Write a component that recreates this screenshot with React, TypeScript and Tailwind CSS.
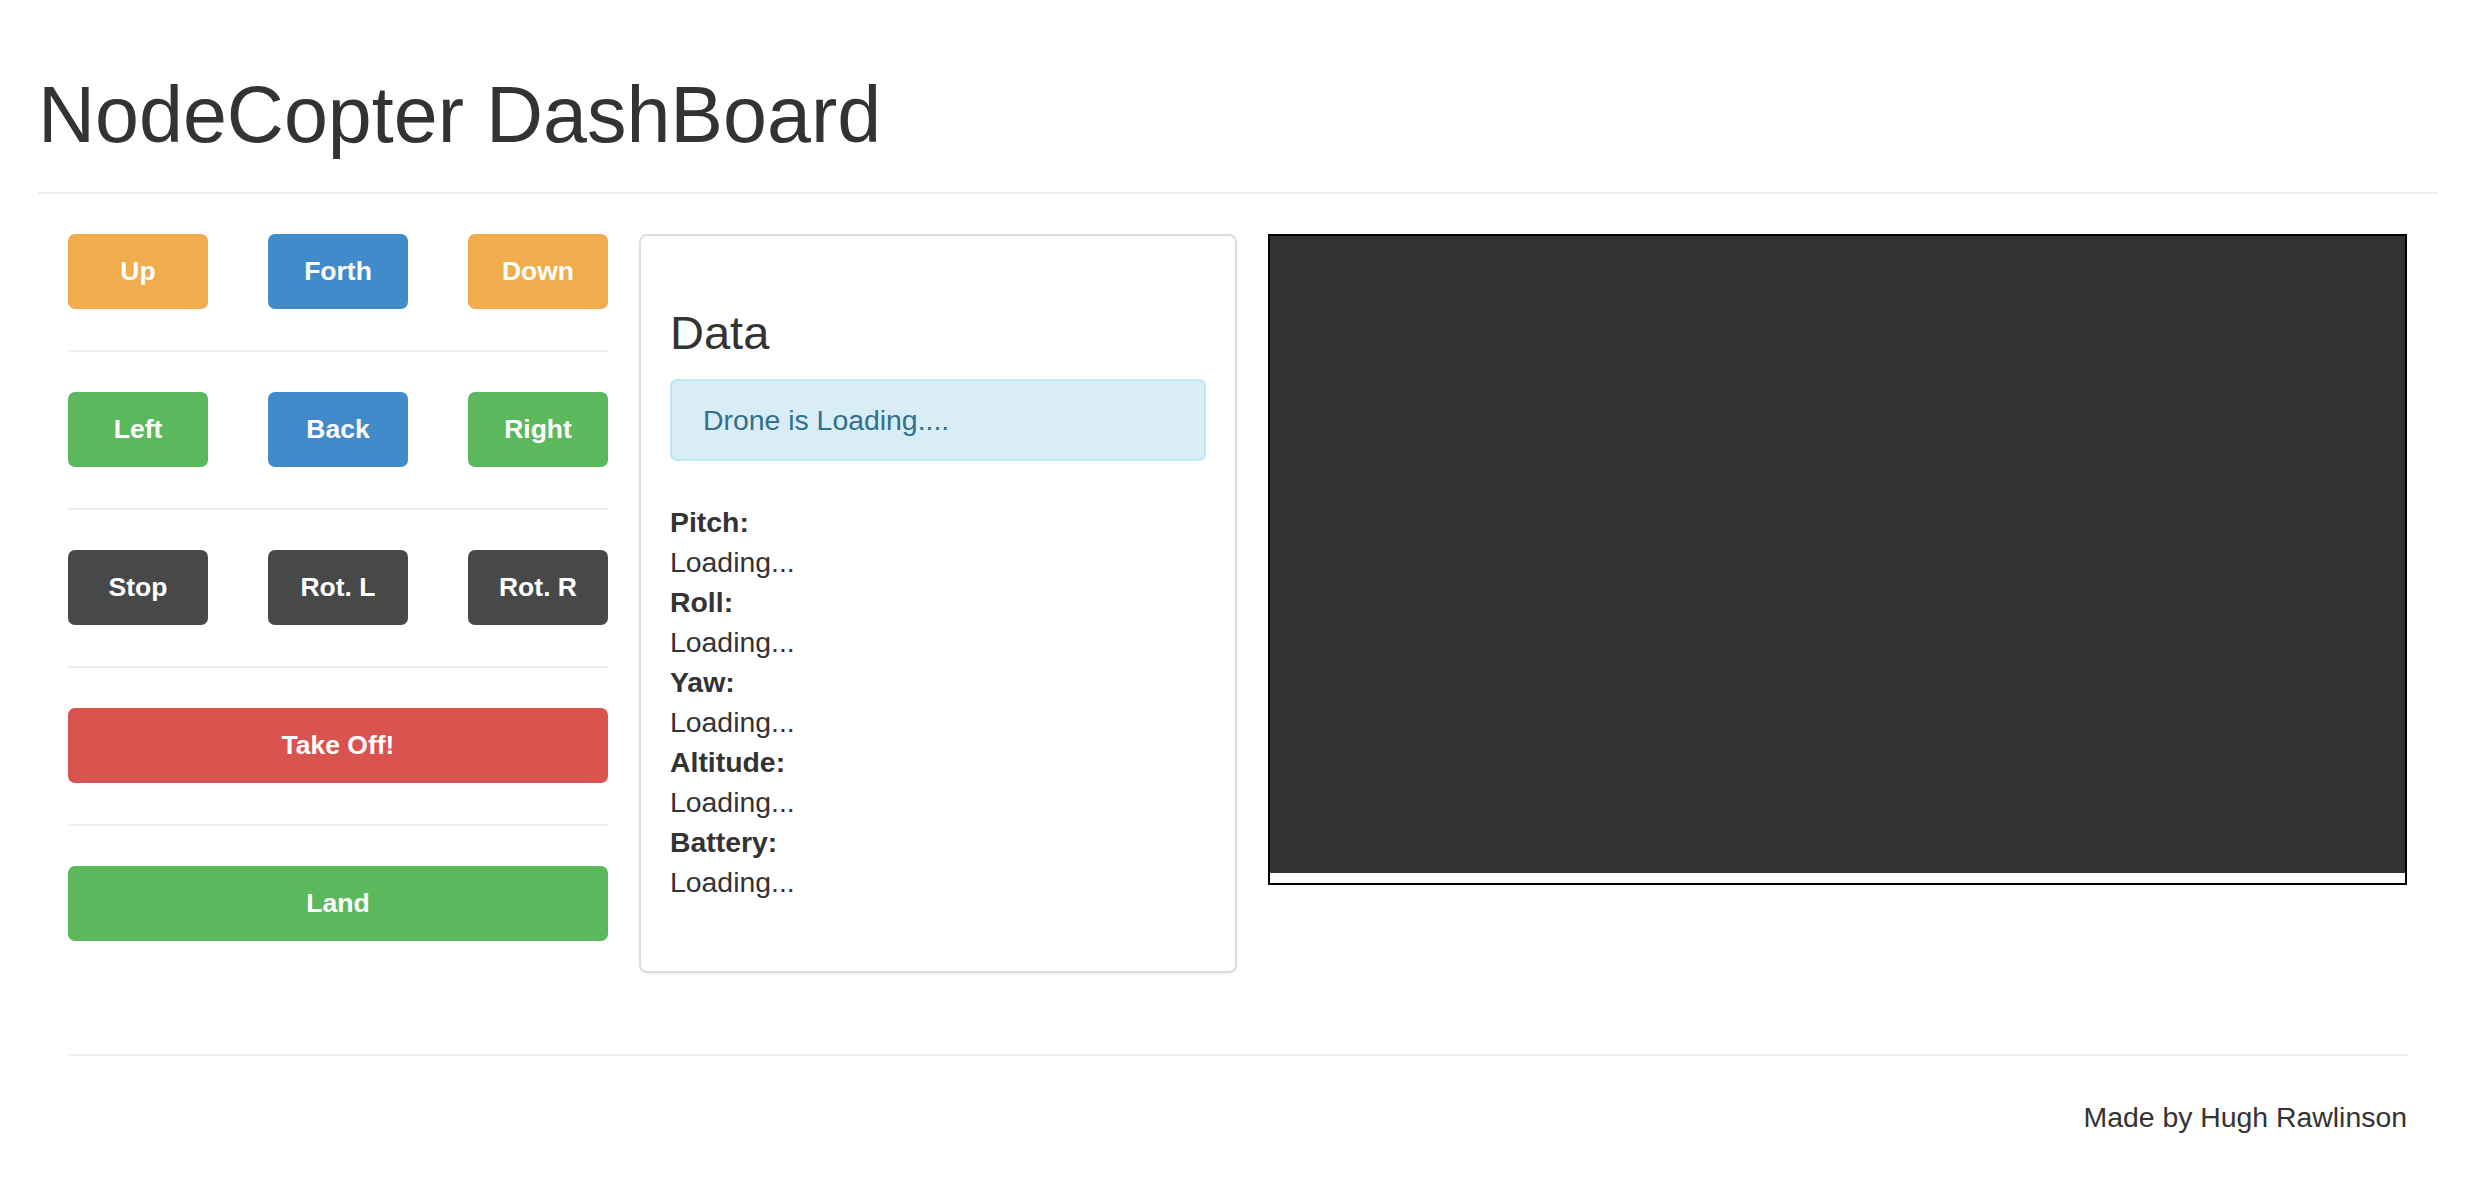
const rows = [
  [
    { label: "Up", color: "bg-[#f0ad4e]" },
    { label: "Forth", color: "bg-[#428bca]" },
    { label: "Down", color: "bg-[#f0ad4e]" }
  ],
  [
    { label: "Left", color: "bg-[#5cb85c]" },
    { label: "Back", color: "bg-[#428bca]" },
    { label: "Right", color: "bg-[#5cb85c]" }
  ],
  [
    { label: "Stop", color: "bg-[#474949]" },
    { label: "Rot. L", color: "bg-[#474949]" },
    { label: "Rot. R", color: "bg-[#474949]" }
  ]
];

const readings = ["Pitch", "Roll", "Yaw", "Altitude", "Battery"];

function Btn({ label, color, wide }: { label: string; color: string; wide?: boolean }) {
  return (
    <button
      className={`${color} ${wide ? "w-full" : "w-[140px]"} h-[75px] rounded-[7px] flex items-center justify-center text-white font-bold text-[26.5px] leading-none`}
    >
      {label}
    </button>
  );
}

function Divider() {
  return <div className="h-[2px] bg-[#eeeeee] mt-[41px] mb-[40px]" />;
}

export default function App() {
  return (
    <div className="min-h-screen bg-white text-[#333333] font-['Liberation_Sans',Arial,sans-serif] pb-[40px]">
      <div className="pl-[38px] pr-[28px]">
        <h1 className="pt-[72px] text-[79px] leading-[86px] font-normal">NodeCopter DashBoard</h1>
        <div className="h-[2px] bg-[#eeeeee] mt-[34px]" />
      </div>

      <div className="flex items-start pl-[68px] mt-[40px]">
        <div className="w-[540px]">
          {rows.map((row, i) => (
            <div key={i}>
              <div className="flex justify-between">
                {row.map((b) => (
                  <Btn key={b.label} label={b.label} color={b.color} />
                ))}
              </div>
              <Divider />
            </div>
          ))}
          <Btn label="Take Off!" color="bg-[#d9534f]" wide />
          <Divider />
          <Btn label="Land" color="bg-[#5cb85c]" wide />
        </div>

        <div className="ml-[31px] w-[598px] border-2 border-[#dddddd] rounded-[8px] shadow-[0_2px_2px_rgba(0,0,0,0.05)] px-[29px] pt-[71px] pb-[69px]">
          <h2 className="text-[47px] leading-[52px] font-normal">Data</h2>
          <div className="mt-[20px] border-2 border-[#bce8f1] bg-[#d9edf7] text-[#31708f] rounded-[7px] pl-[31px] py-[19px] text-[28.4px] leading-[40px]">
            Drone is Loading....
          </div>
          <div className="mt-[41px] text-[28.4px] leading-[40px]">
            {readings.map((r) => (
              <div key={r}>
                <div className="font-bold">{r}:</div>
                <div>Loading...</div>
              </div>
            ))}
          </div>
        </div>

        <div className="ml-[31px] w-[1139px] border-2 border-black bg-white">
          <div className="h-[637px] bg-[#333333]" />
          <div className="h-[10px]" />
        </div>
      </div>

      <div className="ml-[68px] w-[2340px] mt-[81px]">
        <div className="h-[2px] bg-[#eeeeee]" />
        <p className="mt-[41px] text-right pr-[1px] text-[28.4px] leading-[40px]">Made by Hugh Rawlinson</p>
      </div>
    </div>
  );
}
